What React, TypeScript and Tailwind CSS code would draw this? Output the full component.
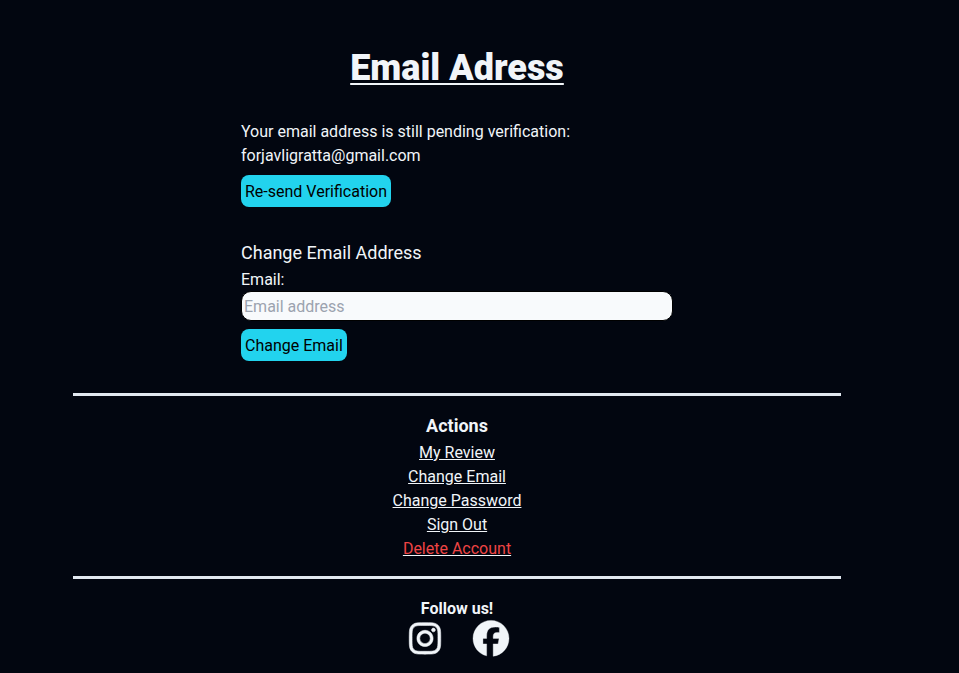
import { FaFacebook, FaInstagram } from "react-icons/fa6";

export default function App() {
  return (
    <div className="h-[673px] w-full overflow-hidden bg-[#020610] font-[Roboto,sans-serif] text-base text-slate-100">
      <main className="ml-[73px] flex w-[768px] flex-col">
        <h1 className="pt-12 text-center text-4xl font-black underline decoration-2 underline-offset-[3px]">Email Adress</h1>
        <section className="mx-auto mt-8 w-[432px]">
          <p>Your email address is still pending verification:</p>
          <p>forjavligratta@gmail.com</p>
          <button className="mt-[7px] block rounded-lg bg-[#22d3ee] px-1 pt-[5px] pb-[3px] text-black">Re-send Verification</button>
          <h2 className="mt-8 text-lg">Change Email Address</h2>
          <label className="block h-6 pt-px">Email:</label>
          <input placeholder="Email address" className="block h-[30px] w-full rounded-[10px] border border-black bg-slate-50 p-0.5 text-black placeholder:text-[#9ca3af]" />
          <button className="mt-2 block rounded-lg bg-[#22d3ee] px-1 pt-[5px] pb-[3px] text-black">Change Email</button>
        </section>
        <nav className="mt-8 flex flex-col items-center border-y-[3px] border-slate-200 pt-4 pb-[15px]">
          <h2 className="mb-px text-lg font-bold">Actions</h2>
          <a className="underline">My Review</a>
          <a className="underline">Change Email</a>
          <a className="underline">Change Password</a>
          <a className="underline">Sign Out</a>
          <a className="underline"><span className="text-[#ef4444]">Delete Account</span></a>
        </nav>
        <footer className="mt-[18px] flex flex-col items-center">
          <h3 className="font-bold">Follow us!</h3>
          <div className="-mt-px ml-0.5 flex items-center gap-[30px]">
            <FaInstagram size={36} className="translate-y-[0.4px] overflow-visible stroke-current stroke-[8]" />
            <FaFacebook size={36} className="translate-y-[0.4px] overflow-visible stroke-current stroke-[5]" />
          </div>
        </footer>
      </main>
    </div>
  );
}
